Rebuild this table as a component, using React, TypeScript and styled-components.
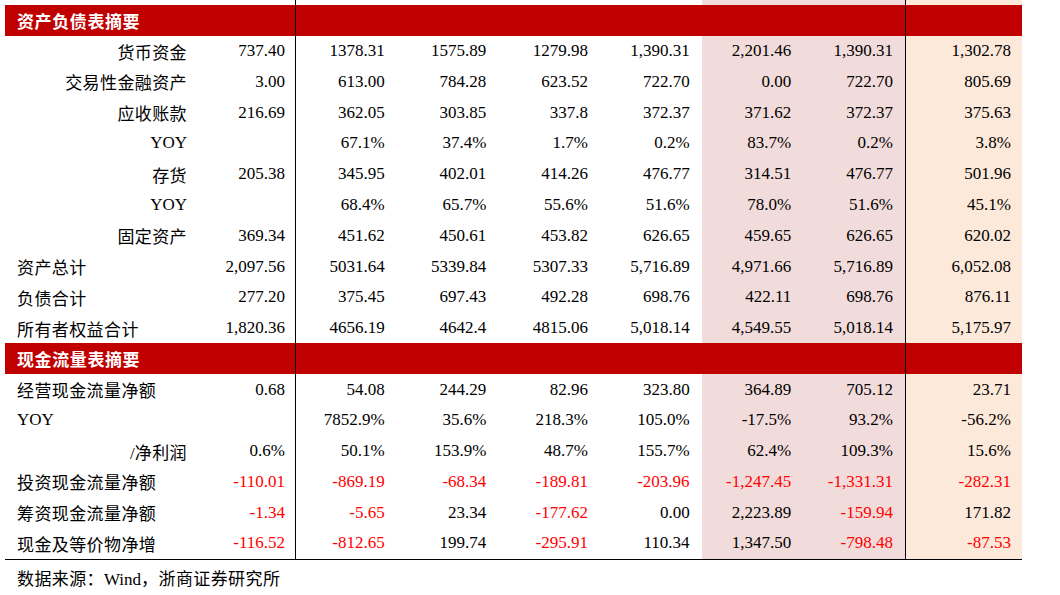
import React from "react";
import styled, { createGlobalStyle, css } from "styled-components";

const Global = createGlobalStyle`
  html, body { margin: 0; padding: 0; background: #ffffff; }
  body { font-family: "Liberation Serif", "Noto Sans CJK SC", serif; color: #000; }
`;

const COLS = "185px 105px repeat(6, 101.667px) 117px";
const ROW_H = "30.78px";

const Page = styled.div`
  padding: 0 38px 0 5px;
  width: 1017px;
`;

const Table = styled.div`
  display: flex;
  flex-direction: column;
  border-bottom: 1px solid #000;
`;

const Row = styled.div<{ $h?: string; $header?: boolean }>`
  display: grid;
  grid-template-columns: ${COLS};
  height: ${(p) => p.$h ?? ROW_H};
  background: ${(p) => (p.$header ? "#c00000" : "transparent")};
`;

type Shade = "none" | "pink" | "peach";

const Cell = styled.div<{ $shade?: Shade; $line?: boolean; $align?: "left" | "right"; $red?: boolean; $pr?: number; $header?: boolean }>`
  display: flex;
  align-items: center;
  justify-content: ${(p) => (p.$align === "left" ? "flex-start" : "flex-end")};
  padding: 0 ${(p) => p.$pr ?? 12}px 0 ${(p) => (p.$align === "left" ? 12 : 0)}px;
  box-sizing: border-box;
  white-space: nowrap;
  font-size: 17px;
  color: ${(p) => (p.$red ? "#ff0000" : "#000")};
  ${(p) =>
    !p.$header &&
    css`
      background: ${p.$shade === "pink" ? "#f2dcdb" : p.$shade === "peach" ? "#fde9d9" : "transparent"};
    `}
  ${(p) =>
    p.$line &&
    css`
      box-shadow: inset 1px 0 0 #000;
    `}
`;

const Cjk = styled.span`
  font-family: "Noto Sans CJK SC", sans-serif;
  font-size: 17px;
  letter-spacing: 0.4px;
  font-weight: 400;
`;

const HeaderText = styled.span`
  font-family: "Noto Sans CJK SC", sans-serif;
  font-weight: 700;
  font-size: 17px;
  letter-spacing: 0.6px;
  color: #ffffff;
`;

const Source = styled.div`
  padding: 6px 0 0 12px;
  font-size: 17px;
  line-height: 24px;
`;

const shadeFor = (i: number): Shade => (i === 6 || i === 7 ? "pink" : i === 8 ? "peach" : "none");
const lineFor = (i: number) => i === 2 || i === 8;

type RowData = { label: string; align: "left" | "right"; values: string[] };

const sec1: RowData[] = [
  { label: "货币资金", align: "right", values: ["737.40", "1378.31", "1575.89", "1279.98", "1,390.31", "2,201.46", "1,390.31", "1,302.78"] },
  { label: "交易性金融资产", align: "right", values: ["3.00", "613.00", "784.28", "623.52", "722.70", "0.00", "722.70", "805.69"] },
  { label: "应收账款", align: "right", values: ["216.69", "362.05", "303.85", "337.8", "372.37", "371.62", "372.37", "375.63"] },
  { label: "YOY", align: "right", values: ["", "67.1%", "37.4%", "1.7%", "0.2%", "83.7%", "0.2%", "3.8%"] },
  { label: "存货", align: "right", values: ["205.38", "345.95", "402.01", "414.26", "476.77", "314.51", "476.77", "501.96"] },
  { label: "YOY", align: "right", values: ["", "68.4%", "65.7%", "55.6%", "51.6%", "78.0%", "51.6%", "45.1%"] },
  { label: "固定资产", align: "right", values: ["369.34", "451.62", "450.61", "453.82", "626.65", "459.65", "626.65", "620.02"] },
  { label: "资产总计", align: "left", values: ["2,097.56", "5031.64", "5339.84", "5307.33", "5,716.89", "4,971.66", "5,716.89", "6,052.08"] },
  { label: "负债合计", align: "left", values: ["277.20", "375.45", "697.43", "492.28", "698.76", "422.11", "698.76", "876.11"] },
  { label: "所有者权益合计", align: "left", values: ["1,820.36", "4656.19", "4642.4", "4815.06", "5,018.14", "4,549.55", "5,018.14", "5,175.97"] },
];

const sec2: RowData[] = [
  { label: "经营现金流量净额", align: "left", values: ["0.68", "54.08", "244.29", "82.96", "323.80", "364.89", "705.12", "23.71"] },
  { label: "YOY", align: "left", values: ["", "7852.9%", "35.6%", "218.3%", "105.0%", "-17.5%", "93.2%", "-56.2%"] },
  { label: "/净利润", align: "right", values: ["0.6%", "50.1%", "153.9%", "48.7%", "155.7%", "62.4%", "109.3%", "15.6%"] },
  { label: "投资现金流量净额", align: "left", values: ["-110.01", "-869.19", "-68.34", "-189.81", "-203.96", "-1,247.45", "-1,331.31", "-282.31"] },
  { label: "筹资现金流量净额", align: "left", values: ["-1.34", "-5.65", "23.34", "-177.62", "0.00", "2,223.89", "-159.94", "171.82"] },
  { label: "现金及等价物净增", align: "left", values: ["-116.52", "-812.65", "199.74", "-295.91", "110.34", "1,347.50", "-798.48", "-87.53"] },
];

const renderLabel = (label: string) => {
  if (label === "YOY") return <span>YOY</span>;
  if (label.startsWith("/")) {
    return (
      <span>
        /<Cjk>{label.slice(1)}</Cjk>
      </span>
    );
  }
  return <Cjk>{label}</Cjk>;
};

const DataRow: React.FC<{ row: RowData }> = ({ row }) => (
  <Row>
    <Cell $align={row.align} $pr={row.align === "right" ? 3 : 0}>
      {renderLabel(row.label)}
    </Cell>
    {row.values.map((v, i) => {
      const idx = i + 1;
      const red = v.startsWith("-") && !v.endsWith("%");
      return (
        <Cell key={i} $shade={shadeFor(idx)} $line={lineFor(idx)} $red={red} $pr={idx === 1 ? 10 : idx === 8 ? 11 : 12}>
          {v}
        </Cell>
      );
    })}
  </Row>
);

const HeaderRow: React.FC<{ title: string }> = ({ title }) => (
  <Row $header>
    <Cell $header $align="left">
      <HeaderText>{title}</HeaderText>
    </Cell>
    {Array.from({ length: 8 }).map((_, i) => (
      <Cell key={i} $header $line={lineFor(i + 1)} />
    ))}
  </Row>
);

const TopStrip: React.FC = () => (
  <Row $h="5px">
    {Array.from({ length: 9 }).map((_, i) => (
      <Cell key={i} $shade={shadeFor(i)} $line={lineFor(i)} />
    ))}
  </Row>
);

export default function App() {
  return (
    <Page>
      <Global />
      <Table>
        <TopStrip />
        <HeaderRow title="资产负债表摘要" />
        {sec1.map((r, i) => (
          <DataRow key={`a${i}`} row={r} />
        ))}
        <HeaderRow title="现金流量表摘要" />
        {sec2.map((r, i) => (
          <DataRow key={`b${i}`} row={r} />
        ))}
      </Table>
      <Source>
        <Cjk>数据来源：</Cjk>Wind<Cjk>，浙商证券研究所</Cjk>
      </Source>
    </Page>
  );
}
